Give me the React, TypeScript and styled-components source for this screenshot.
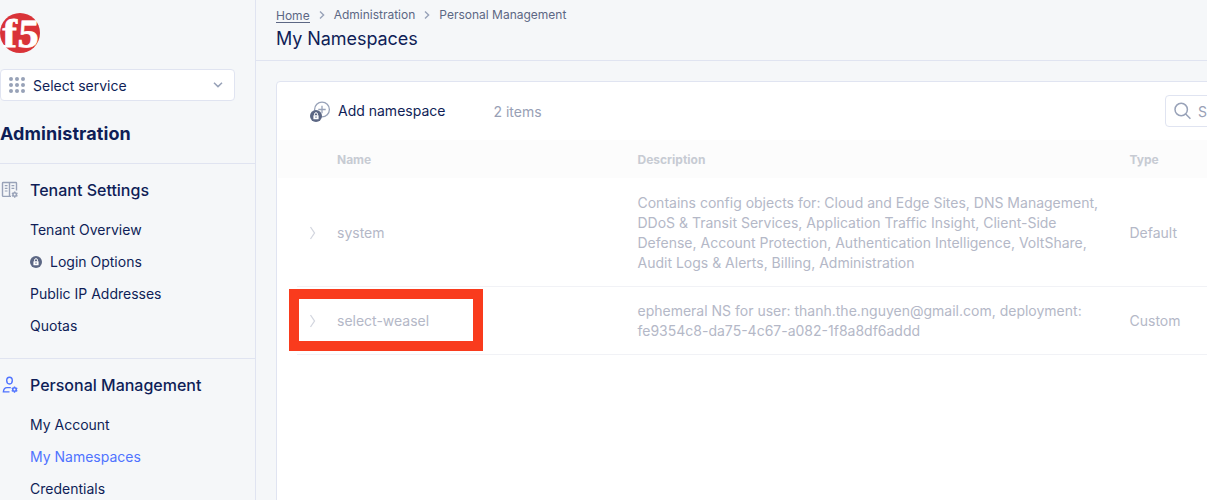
import React from "react";
import styled, { createGlobalStyle, css } from "styled-components";

const GlobalStyle = createGlobalStyle`
  * { box-sizing: border-box; }
  html, body { margin: 0; padding: 0; }
  body {
    background: #f5f7f9;
    color: #0f1e57;
    font-family: Inter, "Liberation Sans", sans-serif;
    font-size: 14px;
    overflow: hidden;
  }
`;

const Page = styled.div`
  display: flex;
  width: 100%;
  height: 500px;
  overflow: hidden;
  background: #f5f7f9;
`;

const Sidebar = styled.aside`
  flex: 0 0 256px;
  border-right: 1px solid #e0e4f1;
  padding-top: 13px;
`;

const Logo = styled.svg`
  display: block;
  width: 40px;
  height: 40px;
  overflow: visible;
`;

const ServiceSelect = styled.div`
  display: flex;
  align-items: center;
  width: 235px;
  height: 32px;
  margin-top: 16px;
  padding: 0 11px 0 8px;
  background: #fff;
  border: 1px solid #e0e4f1;
  border-radius: 4px;
`;

const ServiceLabel = styled.span`
  flex: 1;
  margin-left: 8px;
  padding-top: 2px;
  line-height: 20px;
`;

const WorkspaceTitle = styled.h1`
  margin: 0;
  height: 63px;
  padding-top: 21px;
  border-bottom: 1px solid #e0e4f1;
  font-size: 18px;
  font-weight: 700;
  line-height: 24px;
  letter-spacing: 0.08px;
`;

const NavSection = styled.section`
  height: 195px;
  padding-top: 14px;
  border-bottom: 1px solid #e0e4f1;
`;

const NavHeading = styled.h2`
  display: flex;
  align-items: center;
  gap: 11px;
  margin: 0 0 11px;
  font-size: 16px;
  font-weight: 500;
  line-height: 24px;
  svg { flex: none; margin-left: 1px; }
`;

const NavItem = styled.a<{ $active?: boolean }>`
  display: flex;
  align-items: center;
  gap: 8px;
  height: 32px;
  padding-left: 30px;
  color: ${(p) => (p.$active ? "#4f73ff" : "#0f1e57")};
  svg { margin-top: 1px; }
`;

const Main = styled.main`
  flex: 1;
  min-width: 0;
`;

const Header = styled.header`
  height: 61px;
  padding: 7px 0 0 20px;
  border-bottom: 1px solid #e0e4f1;
`;

const Breadcrumbs = styled.nav`
  display: flex;
  align-items: center;
  height: 16px;
  font-size: 12px;
  line-height: 16px;
  color: #5c6784;
  svg { margin: 0 9px; }
`;

const HomeLink = styled.a`
  height: 15px;
  line-height: 15px;
  border-bottom: 1px solid #5c6784;
`;

const PageTitle = styled.h2`
  margin: 4px 0 0;
  font-size: 18px;
  font-weight: 400;
  line-height: 24px;
  letter-spacing: -0.07px;
`;

const Panel = styled.section`
  width: 1200px;
  height: 460px;
  margin: 20px 0 0 20px;
  background: #fff;
  border: 1px solid #e0e4f1;
  border-radius: 4px;
`;

const Toolbar = styled.div`
  display: flex;
  align-items: center;
  height: 58px;
  padding-left: 32px;
`;

const AddButton = styled.button`
  display: flex;
  align-items: center;
  gap: 7px;
  padding: 0;
  border: 0;
  background: none;
  color: #0f1e57;
  font: inherit;
  line-height: 20px;
  span { padding-bottom: 1px; }
`;

const Count = styled.span`
  margin-left: 48px;
  padding-top: 1px;
  line-height: 20px;
  color: #98a0b5;
`;

const SearchBox = styled.div`
  display: flex;
  align-items: center;
  gap: 6px;
  width: 260px;
  height: 32px;
  margin-left: auto;
  margin-right: 50px;
  padding-left: 8px;
  border: 1px solid #e0e4f1;
  border-radius: 4px;
  color: #98a0b5;
`;

const columns = css`
  display: grid;
  grid-template-columns: 40px 300.5px 492px 1fr;
  align-items: center;
`;

const TableHead = styled.div`
  ${columns}
  height: 38px;
  margin-left: 1px;
  padding-left: 19px;
  background: #fcfcfc;
  color: #c7cbd3;
  font-size: 12px;
  font-weight: 700;
`;

const TableBody = styled.div`
  padding: 1px 0 0 20px;
`;

const TableRow = styled.div`
  ${columns}
  position: relative;
  padding: 14px 0 13px;
  border-bottom: 1px solid #f1f2f6;
  color: #b4b8c7;
  line-height: 20px;
`;

const Expand = styled.span`
  display: flex;
  padding-left: 12px;
`;

const Description = styled.div`
  white-space: pre-line;
`;

const Highlight = styled.div`
  position: absolute;
  left: -8px;
  top: 2px;
  width: 194px;
  height: 62px;
  border: 10px solid #f93b1d;
`;

function BrandLogo() {
  return (
    <Logo viewBox="0 0 40 40" aria-label="f5">
      <circle cx="20" cy="20" r="20" fill="#d93338" />
      <g fill="#fff" fontFamily="Liberation Serif, serif" fontWeight="700" stroke="#fff" strokeWidth="0.8">
        <text transform="translate(2.4 34) scale(1.06 1)" fontSize="41">f</text>
        <text transform="translate(17.2 34.3) skewX(-4) scale(1.04 1)" fontSize="40">5</text>
      </g>
    </Logo>
  );
}

function GridDots() {
  return (
    <svg width="16" height="16" fill="#98a2b8">
      {[2, 8, 14].map((y) => [2, 8, 14].map((x) => <circle key={`${x}-${y}`} cx={x} cy={y} r="2" />))}
    </svg>
  );
}

function Chevron({ down, color = "#98a2b8" }: { down?: boolean; color?: string }) {
  return down ? (
    <svg width="10" height="6" fill="none" stroke={color} strokeWidth="1.5">
      <path d="M1 .7 5 4.6 9 .7" />
    </svg>
  ) : (
    <svg width="6" height="8" fill="none" stroke={color} strokeWidth="1.4">
      <path d="M1 .6 4.6 4 1 7.4" />
    </svg>
  );
}

function Gear({ x, y, fill }: { x: number; y: number; fill: string }) {
  return (
    <g transform={`translate(${x} ${y})`} stroke={fill} fill="none">
      <circle r="1.75" strokeWidth="1.5" />
      <path strokeWidth="1.4" d="M0-3.2V-2M0 3.2V2M-2.8-1.6-1.7-1M2.8-1.6 1.7-1M-2.8 1.6-1.7 1M2.8 1.6 1.7 1" />
    </g>
  );
}

function TenantIcon() {
  return (
    <svg width="18" height="18" fill="none" stroke="#98a2b8">
      <path strokeWidth="1.4" d="M10 15.4H2.2c-.4 0-.7-.3-.7-.7V2.2c0-.4.3-.7.7-.7h12.6c.4 0 .7.3.7.7V9.5M8.5 1.5V15.4" />
      <path strokeWidth="1.2" d="M3.8 4.6H6.5M3.8 7.3H6.5M3.8 10H6.5M10.5 4.6H13.3M10.5 7.3H13.3" />
      <Gear x={13.7} y={13.6} fill="#98a2b8" />
    </svg>
  );
}

function PersonIcon() {
  return (
    <svg width="18" height="18" fill="none" stroke="#4f73ff">
      <ellipse cx="8.5" cy="4.6" rx="2.8" ry="3.4" strokeWidth="1.4" />
      <path strokeWidth="1.4" d="M8.5 15.9H2.4c.2-2.9 1.5-4.3 3.6-4.3h3.8" />
      <Gear x={13.5} y={13.6} fill="#4f73ff" />
    </svg>
  );
}

function LockGlyph() {
  return (
    <>
      <circle cx="6" cy="6" r="6" fill="#5c6784" />
      <rect x="3.4" y="5.3" width="5.2" height="3.9" rx=".5" fill="#fff" />
      <path d="M4.5 5.4V4.2a1.5 1.5 0 0 1 3 0v1.2" fill="none" stroke="#fff" />
      <path d="M6 6.4v1.5" stroke="#5c6784" />
    </>
  );
}

function AddLockedIcon() {
  return (
    <svg width="22" height="22" fill="none">
      <g stroke="#98a2b8" strokeWidth="1.3">
        <circle cx="13" cy="9.5" r="7.4" />
        <path d="M13 5.8v7.4M9.3 9.5h7.4" />
      </g>
      <g transform="translate(1 10)"><LockGlyph /></g>
    </svg>
  );
}

const rows = [
  {
    name: "system",
    description:
      "Contains config objects for: Cloud and Edge Sites, DNS Management,\nDDoS & Transit Services, Application Traffic Insight, Client-Side\nDefense, Account Protection, Authentication Intelligence, VoltShare,\nAudit Logs & Alerts, Billing, Administration",
    type: "Default",
  },
  {
    name: "select-weasel",
    description:
      "ephemeral NS for user: thanh.the.nguyen@gmail.com, deployment:\nfe9354c8-da75-4c67-a082-1f8a8df6addd",
    type: "Custom",
    highlighted: true,
  },
];

export default function App() {
  return (
    <>
      <GlobalStyle />
      <Page>
        <Sidebar>
          <BrandLogo />
          <ServiceSelect>
            <GridDots />
            <ServiceLabel>Select service</ServiceLabel>
            <Chevron down />
          </ServiceSelect>
          <WorkspaceTitle>Administration</WorkspaceTitle>
          <NavSection>
            <NavHeading><TenantIcon />Tenant Settings</NavHeading>
            <NavItem>Tenant Overview</NavItem>
            <NavItem>
              <svg width="12" height="12"><LockGlyph /></svg>
              Login Options
            </NavItem>
            <NavItem>Public IP Addresses</NavItem>
            <NavItem>Quotas</NavItem>
          </NavSection>
          <NavSection>
            <NavHeading><PersonIcon />Personal Management</NavHeading>
            <NavItem>My Account</NavItem>
            <NavItem $active>My Namespaces</NavItem>
            <NavItem>Credentials</NavItem>
          </NavSection>
        </Sidebar>
        <Main>
          <Header>
            <Breadcrumbs>
              <HomeLink>Home</HomeLink>
              <Chevron />
              <span>Administration</span>
              <Chevron />
              <span>Personal Management</span>
            </Breadcrumbs>
            <PageTitle>My Namespaces</PageTitle>
          </Header>
          <Panel>
            <Toolbar>
              <AddButton><AddLockedIcon /><span>Add namespace</span></AddButton>
              <Count>2 items</Count>
              <SearchBox>
                <svg width="18" height="18" fill="none" stroke="#98a2b8" strokeWidth="1.5">
                  <circle cx="7.2" cy="7.5" r="6.2" />
                  <path d="m11.7 12 4.7 4.7" />
                </svg>
                Search
              </SearchBox>
            </Toolbar>
            <TableHead>
              <span />
              <span>Name</span>
              <span>Description</span>
              <span>Type</span>
            </TableHead>
            <TableBody>
              {rows.map((row) => (
                <TableRow key={row.name}>
                  <Expand>
                    <svg width="8" height="14" fill="none" stroke="#d3d6df" strokeWidth="1.3">
                      <path d="m1.5 1 4 6-4 6" />
                    </svg>
                  </Expand>
                  <span>{row.name}</span>
                  <Description>{row.description}</Description>
                  <span>{row.type}</span>
                  {row.highlighted && <Highlight />}
                </TableRow>
              ))}
            </TableBody>
          </Panel>
        </Main>
      </Page>
    </>
  );
}
